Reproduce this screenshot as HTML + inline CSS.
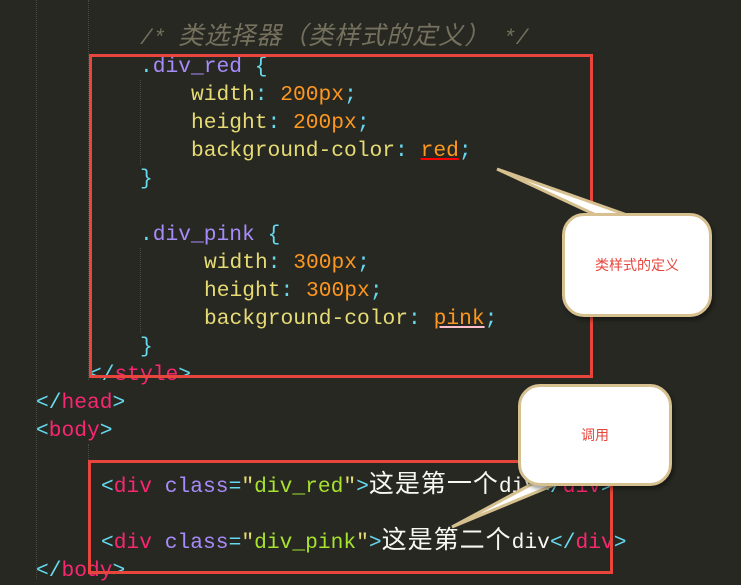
<!DOCTYPE html>
<html><head><meta charset="utf-8"><style>
body{margin:0;width:741px;height:579px;background:#272822;overflow:hidden;position:relative;font-family:"Liberation Mono","Noto Sans CJK SC",monospace;}
.l{position:absolute;white-space:pre;font-size:21.25px;line-height:28px;height:28px;color:#f8f8f2}
.c{color:#75715e;font-style:italic}.s{color:#a6e22e}.p{color:#a78bfa}.n{color:#fd971f}.t{color:#f92672}.g{color:#66d9ef}.y{color:#e6db74}
.z{font-size:25px;letter-spacing:1px;line-height:20px}
.guide{position:absolute;border-left:1px dotted #4a4a44;}
.box{position:absolute;border:3px solid #e8453c;}
.bub{position:absolute;background:#fff;border:3px solid #d6c08f;border-radius:22px;box-shadow:2px 3px 4px rgba(0,0,0,.4);font-family:"Noto Sans CJK SC",sans-serif;color:#e8453c;font-size:14px;display:flex;align-items:center;justify-content:center}
</style></head><body>
<div class="guide" style="left:36px;top:0;height:579px"></div>
<div class="guide" style="left:88px;top:0;height:380px"></div>
<div class="guide" style="left:140px;top:80px;height:85px"></div>
<div class="guide" style="left:140px;top:248px;height:85px"></div>
<div class="guide" style="left:88px;top:444px;height:110px"></div>
<div class="l c" style="left:140px;top:25px">/* <span class="z">类选择器（类样式的定义）</span> */</div>
<div class="l" style="left:140px;top:53px"><span class="g">.</span><span class="p">div_red</span> <span class="g">{</span></div>
<div class="l" style="left:191px;top:81px"><span class="y">width</span><span class="g">:</span> <span class="n">200px</span><span class="g">;</span></div>
<div class="l" style="left:191px;top:109px"><span class="y">height</span><span class="g">:</span> <span class="n">200px</span><span class="g">;</span></div>
<div class="l" style="left:191px;top:137px"><span class="y">background-color</span><span class="g">:</span> <span class="n" style="text-decoration:underline;text-decoration-color:#f00">red</span><span class="g">;</span></div>
<div class="l g" style="left:140px;top:165px">}</div>
<div class="l" style="left:140px;top:221px"><span class="g">.</span><span class="p">div_pink</span> <span class="g">{</span></div>
<div class="l" style="left:204px;top:249px"><span class="y">width</span><span class="g">:</span> <span class="n">300px</span><span class="g">;</span></div>
<div class="l" style="left:204px;top:277px"><span class="y">height</span><span class="g">:</span> <span class="n">300px</span><span class="g">;</span></div>
<div class="l" style="left:204px;top:305px"><span class="y">background-color</span><span class="g">:</span> <span class="n" style="text-decoration:underline;text-decoration-color:#ffc0cb">pink</span><span class="g">;</span></div>
<div class="l g" style="left:140px;top:333px">}</div>
<div class="l" style="left:89px;top:361px"><span class="g">&lt;/</span><span class="t">style</span><span class="g">&gt;</span></div>
<div class="l" style="left:36px;top:389px"><span class="g">&lt;/</span><span class="t">head</span><span class="g">&gt;</span></div>
<div class="l" style="left:36px;top:417px"><span class="g">&lt;</span><span class="t">body</span><span class="g">&gt;</span></div>
<div class="l" style="left:101px;top:473px"><span class="g">&lt;</span><span class="t">div</span> <span class="p">class</span><span class="g">=</span><span class="y">"</span><span class="s">div_red</span><span class="y">"</span><span class="g">&gt;</span><span class="z">这是第一个</span>div<span class="g">&lt;/</span><span class="t">div</span><span class="g">&gt;</span></div>
<div class="l" style="left:101px;top:529px"><span class="g">&lt;</span><span class="t">div</span> <span class="p">class</span><span class="g">=</span><span class="y">"</span><span class="s">div_pink</span><span class="y">"</span><span class="g">&gt;</span><span class="z">这是第二个</span>div<span class="g">&lt;/</span><span class="t">div</span><span class="g">&gt;</span></div>
<div class="l" style="left:36px;top:557px"><span class="g">&lt;/</span><span class="t">body</span><span class="g">&gt;</span></div>
<div class="box" style="left:89px;top:54px;width:498px;height:318px"></div>
<div class="box" style="left:88px;top:460px;width:519px;height:108px"></div>
<svg style="position:absolute;left:0;top:0" width="741" height="579">
<polygon points="497,169 598,216 630,216" fill="#fff" stroke="#d6c08f" stroke-width="3"/>
<polygon points="452,527 558,470 590,470" fill="#fff" stroke="#d6c08f" stroke-width="3"/>
</svg>
<div class="bub" style="left:562px;top:213px;width:144px;height:98px">类样式的定义</div>
<div class="bub" style="left:518px;top:384px;width:148px;height:96px">调用</div>
<svg style="position:absolute;left:0;top:0" width="741" height="579">
<polygon points="600,218 628,218 612,222" fill="#fff"/>
<polygon points="560,483 588,483 574,479" fill="#fff"/>
</svg>
</body></html>
